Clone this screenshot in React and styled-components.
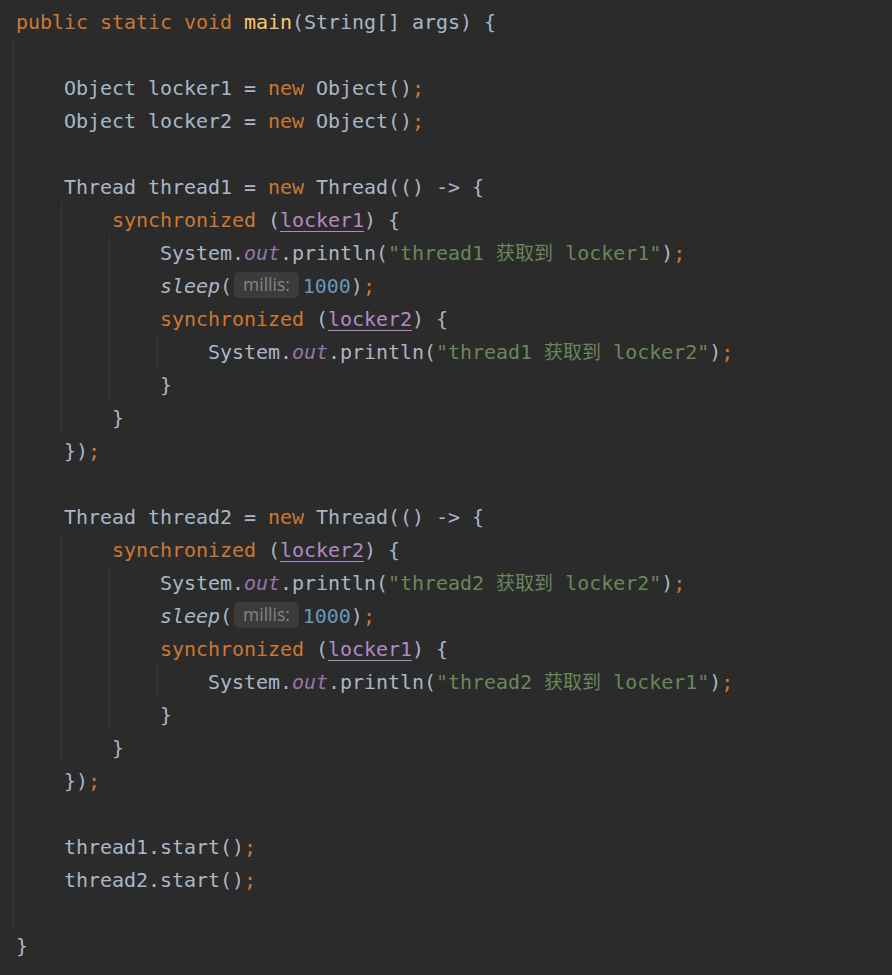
import React from 'react';
import styled, { createGlobalStyle } from 'styled-components';

const GlobalStyle = createGlobalStyle`
    html, body {
        margin: 0;
        padding: 0;
        background: #2b2b2b;
    }
`

const Editor = styled.div`
    min-height: 100vh;
    box-sizing: border-box;
    background: #2b2b2b;
    padding: 4px 0 0 16px;
    font-family: "DejaVu Sans Mono", "Liberation Mono", monospace;
    font-size: 20px;
    letter-spacing: -0.04px;
    color: #a9b7c6;
`

const Line = styled.div`
    height: 33px;
    line-height: 37px;
    white-space: pre;
`

const Block = styled.div`
    margin-left: -3px;
    padding-left: 50px;
    border-left: 1px solid #393939;
`

const Kw = styled.span`
    color: #cc7832;
`

const Method = styled.span`
    color: #ffc66d;
`

const Str = styled.span`
    color: #6a8759;
`

const Cjk = styled.span`
    font-family: "Noto Sans CJK SC", sans-serif;
    font-size: 19px;
    line-height: 1;
    letter-spacing: 0;
`

const Num = styled.span`
    color: #6897bb;
`

const StaticField = styled.span`
    color: #9876aa;
    font-style: italic;
`

const StaticCall = styled.span`
    font-style: italic;
`

const Captured = styled.span`
    color: #b389c5;
    text-decoration: underline;
    text-decoration-color: #b389c5;
    text-underline-offset: 4px;
    text-decoration-thickness: 1px;
`

const Hint = styled.span`
    display: inline-flex;
    align-items: center;
    height: 26px;
    padding: 0 9px 0 9px;
    margin: 0 4px 0 2px;
    vertical-align: middle;
    position: relative;
    top: -3px;
    border-radius: 5px;
    background: #3b3b3b;
    color: #858585;
    font-family: "Open Sans", "Noto Sans", sans-serif;
    font-size: 17.5px;
    letter-spacing: 0;
`

const Semi = () => <Kw>;</Kw>

const Println = ({ text, b }) => (
    <Line>System.<StaticField>out</StaticField>.println(<Str>"{text} <Cjk>获取到</Cjk> {b}"</Str>)<Semi /></Line>
)

const ThreadBlock = ({ name, first, second }) => (
    <>
        <Line>Thread {name} = <Kw>new</Kw> Thread(() -&gt; {'{'}</Line>
        <Block>
            <Line><Kw>synchronized</Kw> (<Captured>{first}</Captured>) {'{'}</Line>
            <Block>
                <Println text={name} b={first} />
                <Line><StaticCall>sleep</StaticCall>(<Hint>millis:</Hint><Num>1000</Num>)<Semi /></Line>
                <Line><Kw>synchronized</Kw> (<Captured>{second}</Captured>) {'{'}</Line>
                <Block>
                    <Println text={name} b={second} />
                </Block>
                <Line>{'}'}</Line>
            </Block>
            <Line>{'}'}</Line>
        </Block>
        <Line>{'})'}<Semi /></Line>
    </>
)

const App = () => {
    return <>
        <GlobalStyle />
        <Editor>
            <Line><Kw>public static void</Kw> <Method>main</Method>(String[] args) {'{'}</Line>
            <Block>
                <Line> </Line>
                <Line>Object locker1 = <Kw>new</Kw> Object()<Semi /></Line>
                <Line>Object locker2 = <Kw>new</Kw> Object()<Semi /></Line>
                <Line> </Line>
                <ThreadBlock name="thread1" first="locker1" second="locker2" />
                <Line> </Line>
                <ThreadBlock name="thread2" first="locker2" second="locker1" />
                <Line> </Line>
                <Line>thread1.start()<Semi /></Line>
                <Line>thread2.start()<Semi /></Line>
                <Line> </Line>
            </Block>
            <Line>{'}'}</Line>
        </Editor>
    </>
}

export default App;
